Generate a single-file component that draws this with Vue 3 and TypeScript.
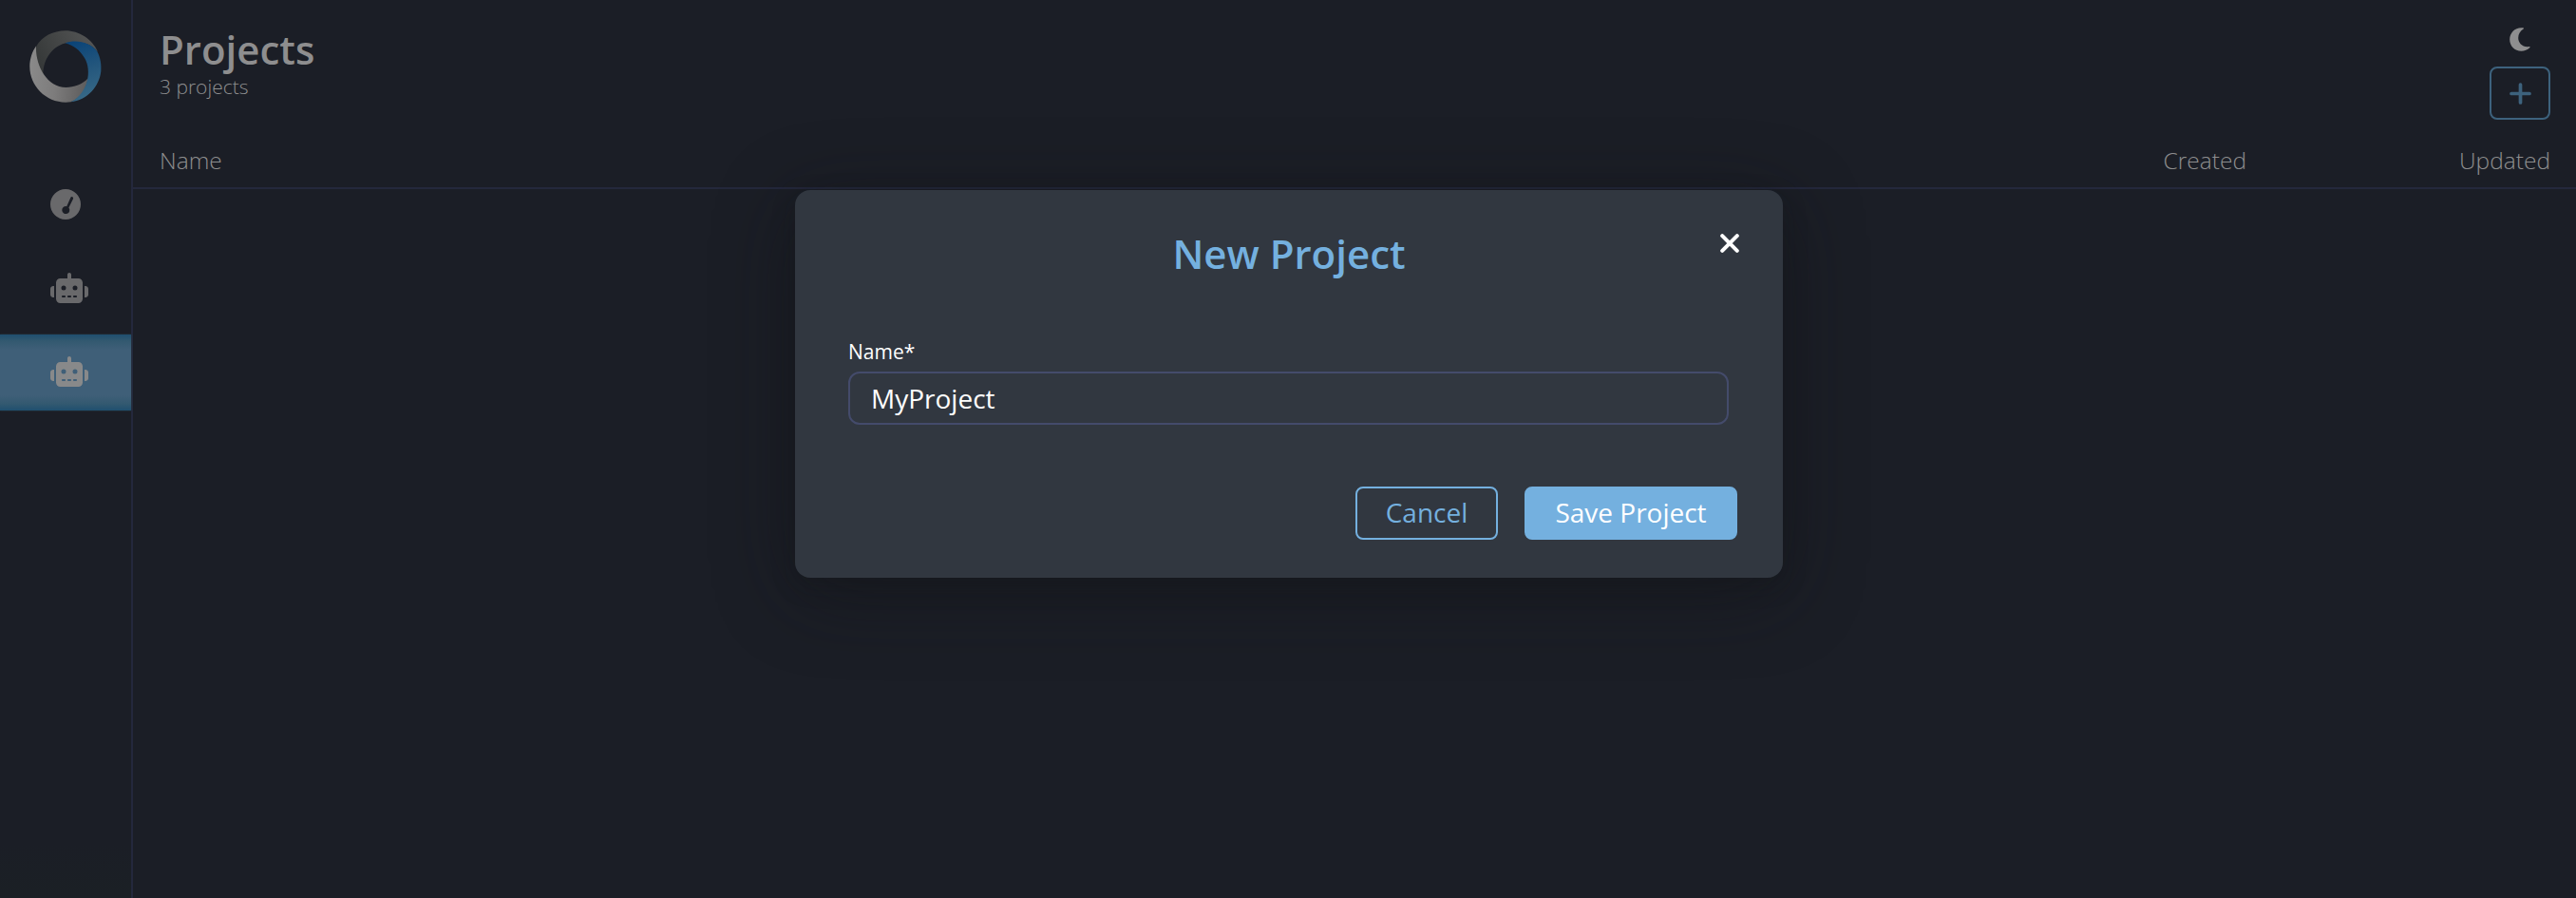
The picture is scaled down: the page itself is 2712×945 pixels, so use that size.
<script setup lang="ts">
import { ref } from 'vue'

const projectName = ref('MyProject')
const navItems = [
  { id: 'dashboard', icon: 'gauge', active: false },
  { id: 'robots', icon: 'robot', active: false },
  { id: 'projects', icon: 'robot', active: true },
]
</script>

<template>
  <div class="app">
    <nav class="sidebar">
      <svg class="logo" viewBox="0 0 76 76">
        <defs>
          <linearGradient id="ringDark" x1="0" y1="0.6" x2="1" y2="0.2">
            <stop offset="0" stop-color="#353838" />
            <stop offset="1" stop-color="#565757" />
          </linearGradient>
          <linearGradient id="ringLight" x1="0" y1="0" x2="1" y2="0.1">
            <stop offset="0" stop-color="#8b8b8b" />
            <stop offset="0.5" stop-color="#7d7c7c" />
            <stop offset="1" stop-color="#605f5f" />
          </linearGradient>
          <linearGradient id="ringBlue" x1="0.3" y1="0" x2="0.5" y2="1">
            <stop offset="0" stop-color="#0b4478" />
            <stop offset="0.5" stop-color="#24577d" />
            <stop offset="1" stop-color="#396a87" />
          </linearGradient>
        </defs>
        <path fill="url(#ringDark)" d="M14.500 50C5 37 4 26 7.300 16.500C13 6.500 25 0.300 38 0.300C52 0.300 66 9 72 22.500C64 13 50 10 37.500 13.500C23 17.500 13 32 14.500 50Z" />
        <path fill="url(#ringLight)" d="M7 16.500C6 36 18 60 38.500 60C47 60 56 56.500 61.500 50.500C60 61 54 71.500 43.500 75.300C20 78.500 0.300 60 0.300 38C0.300 30 3 22 7 16.500Z" />
        <path fill="url(#ringBlue)" d="M37.500 13.300C50 9 64 13 71 21.500C75 29 75.800 36 75.300 43C73.500 59 61 73.500 43.500 75.300C62 66 66 42 58 29C53 20.500 46 15.500 37.500 13.300Z" />
      </svg>
      <ul class="nav">
        <li v-for="item in navItems" :key="item.id" class="nav-item" :class="{ active: item.active }">
          <svg v-if="item.icon === 'gauge'" class="icon-gauge" viewBox="0 0 32 32">
            <path fill-rule="evenodd" d="M16 0a16 16 0 1 1 0 32a16 16 0 1 1 0-32ZM21.300 8.900L17.200 18.200A4 4 0 1 0 19.400 19.600L24 10.200A1.500 1.500 0 0 0 21.300 8.900Z" />
          </svg>
          <svg v-else class="icon-robot" viewBox="0 0 640 512">
            <path fill-rule="evenodd" d="M320 0c17.700 0 32 14.300 32 32v64h120c39.800 0 72 32.200 72 72v272c0 39.800-32.200 72-72 72H168c-39.800 0-72-32.200-72-72V168c0-39.800 32.200-72 72-72h120V32c0-17.700 14.300-32 32-32zM208 384c-8.800 0-16 7.200-16 16s7.200 16 16 16h32c8.800 0 16-7.200 16-16s-7.200-16-16-16h-32zm96 0c-8.800 0-16 7.200-16 16s7.200 16 16 16h32c8.800 0 16-7.200 16-16s-7.200-16-16-16h-32zm96 0c-8.800 0-16 7.200-16 16s7.200 16 16 16h32c8.800 0 16-7.200 16-16s-7.200-16-16-16h-32zM264 256a40 40 0 1 0-80 0 40 40 0 1 0 80 0zm152 40a40 40 0 1 0 0-80 40 40 0 1 0 0 80zM48 224h16v192H48c-26.500 0-48-21.500-48-48v-96c0-26.500 21.500-48 48-48zm544 0c26.500 0 48 21.500 48 48v96c0 26.500-21.500 48-48 48h-16V224h16z" />
          </svg>
        </li>
      </ul>
    </nav>

    <main class="content">
      <header class="page-header">
        <div>
          <h1>Projects</h1>
          <p class="count">3 projects</p>
        </div>
        <div class="actions">
          <svg class="moon" viewBox="0 0 22 25">
            <path d="M12.400 0.200C5.500 0.200 0.200 5.700 0.200 12.500S5.500 24.800 12.400 24.800C15.800 24.800 18.900 23.500 21.200 21.300C22 20.500 21.500 19.800 20.600 20C14.200 21.200 9.200 16.400 9.200 11C9.200 7 11.300 3.600 14.600 1.600C15.200 1.200 15 0.400 14.400 0.300C13.700 0.200 13 0.200 12.400 0.200Z" />
          </svg>
          <button class="add" type="button">
            <svg viewBox="0 0 23 23"><path d="M11.500 2V21M2 11.500H21" /></svg>
          </button>
        </div>
      </header>
      <div class="table-head">
        <span class="col-name">Name</span>
        <span class="col-created">Created</span>
        <span class="col-updated">Updated</span>
      </div>
    </main>

    <section class="modal">
      <h2>New Project</h2>
      <button class="close" type="button">
        <svg viewBox="0 0 20 20"><path d="M2.200 2.200L17.800 17.800M17.800 2.200L2.200 17.800" /></svg>
      </button>
      <label for="project-name">Name*</label>
      <input id="project-name" v-model="projectName" type="text" />
      <div class="buttons">
        <button class="btn outline" type="button">Cancel</button>
        <button class="btn primary" type="button">Save Project</button>
      </div>
    </section>
  </div>
</template>

<style>
body {
  margin: 0;
  background: #1b1e26;
}
</style>

<style scoped>
* {
  box-sizing: border-box;
}
.app {
  position: relative;
  display: flex;
  width: 100%;
  height: 945px;
  overflow: hidden;
  background: #1b1e26;
  font-family: 'Open Sans', 'Noto Sans', sans-serif;
  color: #8e8e8f;
}
h1,
h2,
p,
ul {
  margin: 0;
  padding: 0;
}
button {
  padding: 0;
  font-family: inherit;
}
.sidebar {
  width: 140px;
  flex: none;
  border-right: 2px solid #24283c;
  background: linear-gradient(#1b1e26 94%, #1b2025);
}
.logo {
  display: block;
  width: 76px;
  height: 76px;
  margin: 32px 0 0 31px;
}
.nav {
  margin-top: 67px;
  list-style: none;
}
.nav-item {
  display: flex;
  align-items: center;
  height: 80px;
  margin-bottom: 8px;
  padding-left: 53px;
  fill: #69696b;
}
.nav-item.active {
  margin-top: 9px;
  padding-bottom: 2px;
  fill: #88898a;
  background: linear-gradient(#1f4f6f, #335970 7px, #3f5f78 16px, #3f5f78 64px, #335970 73px, #1f4f6f);
  box-shadow: 0 0 2px #2b4048;
}
.nav-item:nth-child(2) {
  margin-bottom: 0;
}
.icon-gauge {
  width: 32px;
  height: 32px;
}
.icon-robot {
  width: 40px;
  height: 32px;
}
.content {
  flex: 1;
}
.page-header {
  display: flex;
  justify-content: space-between;
  height: 140px;
  padding: 23px 27px 0 28px;
}
h1 {
  font-size: 42px;
  font-weight: 600;
  line-height: 57px;
}
.count {
  font-size: 21px;
  font-weight: 300;
  line-height: 22px;
}
.actions {
  display: flex;
  flex-direction: column;
  align-items: center;
  padding-top: 6px;
}
.moon {
  width: 22px;
  height: 25px;
  fill: #8e8e8f;
}
.add {
  display: flex;
  align-items: center;
  justify-content: center;
  width: 64px;
  height: 56px;
  margin-top: 16px;
  border: 2px solid #3d627d;
  border-radius: 8px;
  background: transparent;
}
.add svg {
  width: 23px;
  height: 23px;
  fill: none;
  stroke: #3d627d;
  stroke-width: 3.7;
  stroke-linecap: round;
}
.table-head {
  display: flex;
  align-items: center;
  height: 59px;
  padding: 0 27px 0 28px;
  border-bottom: 2px solid #24283c;
  font-size: 24.5px;
  font-weight: 300;
}
.col-name {
  flex: 1;
}
.col-updated {
  width: 320px;
  text-align: right;
}
.modal {
  position: absolute;
  top: 200px;
  left: 837px;
  width: 1040px;
  height: 408px;
  padding: 38px 56px 0;
  border-radius: 16px;
  background: #313740;
  box-shadow: 0 16px 84px rgba(17, 18, 23, 0.45), 0 8px 24px rgba(20, 22, 22, 0.25);
  color: #fff;
}
h2 {
  color: #74b0df;
  font-size: 42px;
  font-weight: 600;
  line-height: 57px;
  text-align: center;
}
.close {
  position: absolute;
  top: 46px;
  right: 46px;
  width: 20px;
  height: 20px;
  border: 0;
  background: transparent;
}
.close svg {
  display: block;
  width: 20px;
  height: 20px;
  fill: none;
  stroke: #fff;
  stroke-width: 4;
  stroke-linecap: round;
}
label {
  display: block;
  margin-top: 61px;
  font-size: 21px;
  line-height: 29px;
}
input {
  display: block;
  width: 927px;
  height: 56px;
  margin-top: 6px;
  padding: 0 22px;
  border: 2px solid #444b6b;
  border-radius: 12px;
  outline: 0;
  background: transparent;
  color: #fff;
  font-family: inherit;
  font-size: 28px;
}
.buttons {
  display: flex;
  justify-content: flex-end;
  gap: 28px;
  margin: 65px -8px 0 0;
}
.btn {
  height: 56px;
  padding-bottom: 2px;
  border: 2px solid #74b0df;
  border-radius: 8px;
  font-size: 28px;
  line-height: 50px;
}
.outline {
  width: 150px;
  background: transparent;
  color: #74b0df;
}
.primary {
  width: 224px;
  background: #74b0df;
  color: #fff;
}
</style>
